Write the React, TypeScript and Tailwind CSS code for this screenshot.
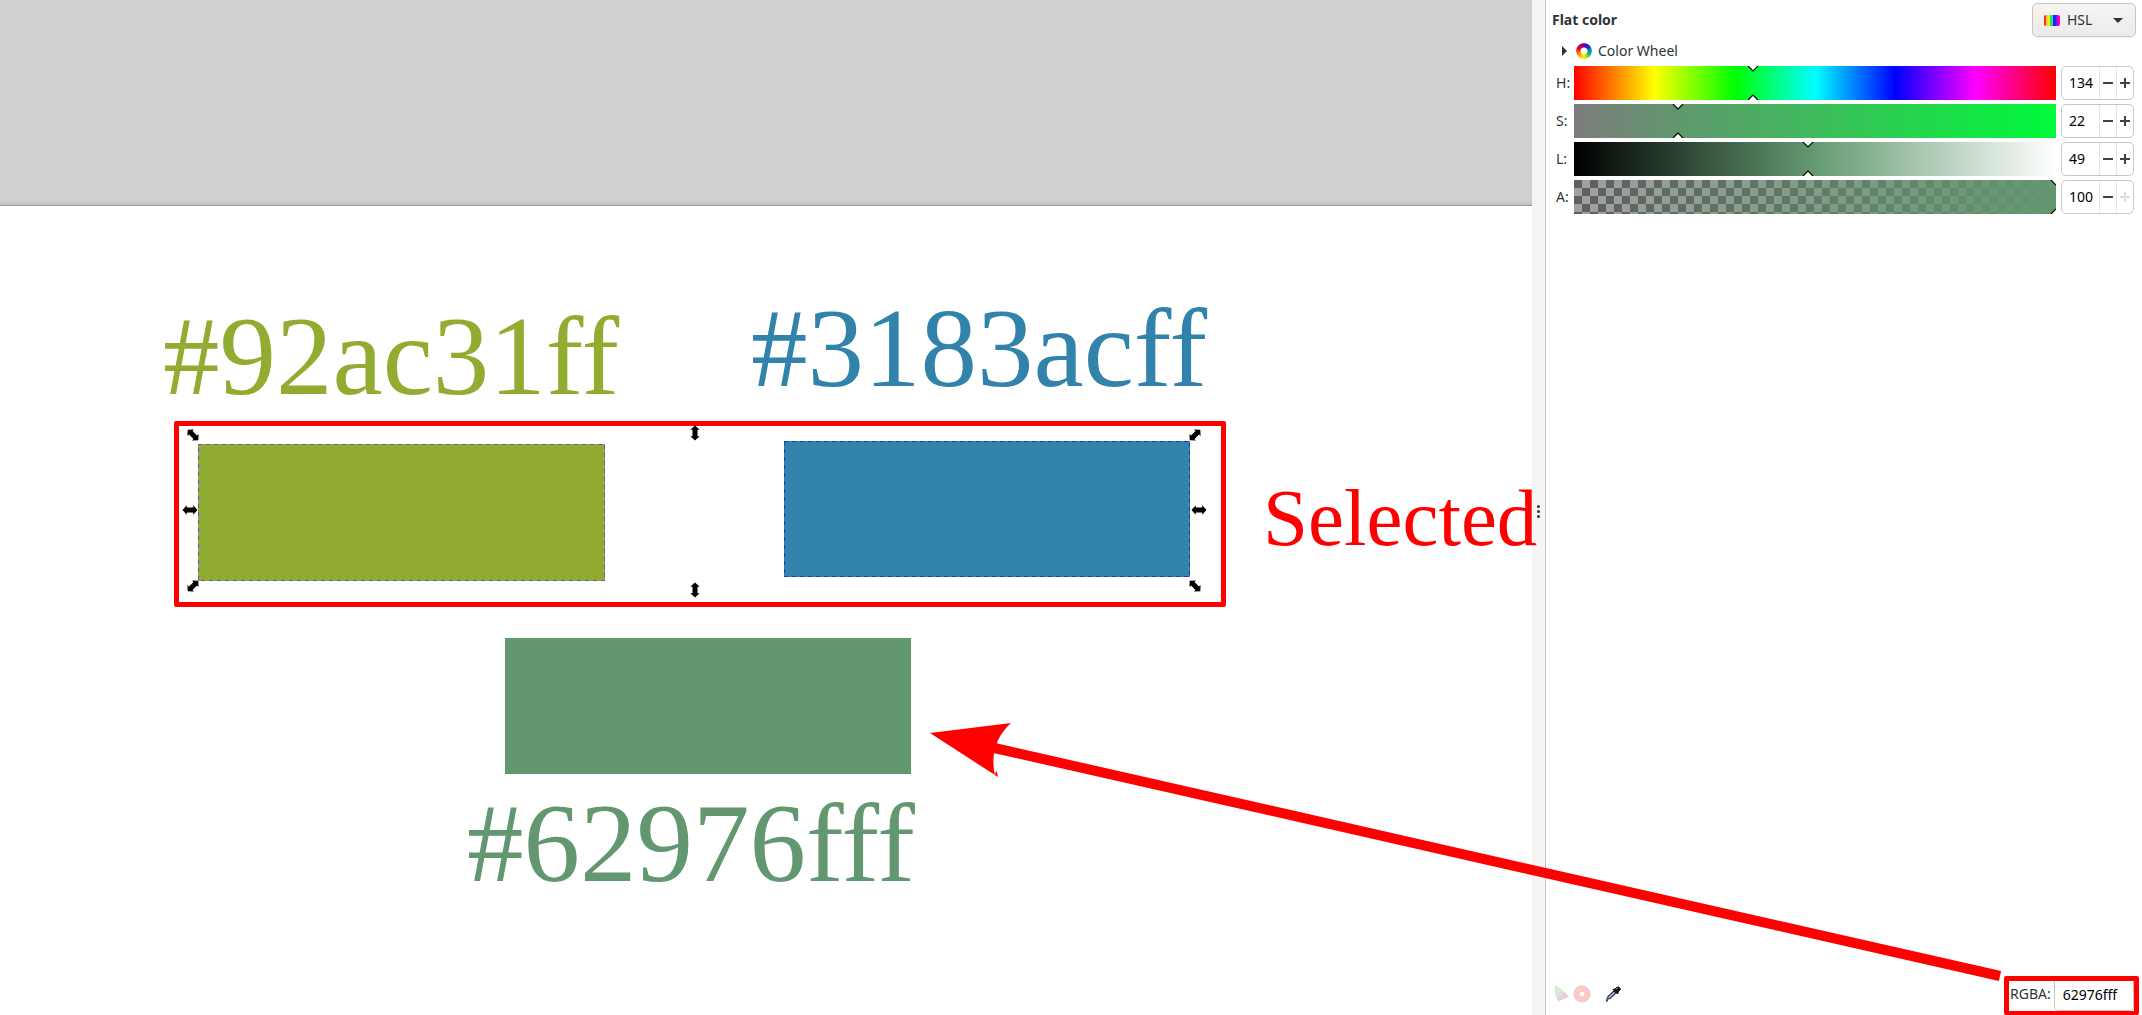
import React, { useState } from "react";

const UI = "font-['Noto_Sans',sans-serif] text-sm text-[#2e3436]";

type Direction = "ew" | "ns" | "nwse" | "nesw";

const TURN: Record<Direction, number> = { ew: 0, ns: 90, nwse: 45, nesw: -45 };

function ScaleHandle({ direction, className }: { direction: Direction; className: string }) {
  return (
    <svg viewBox="-8 -8 16 16" className={`absolute size-4 ${className}`} aria-hidden="true">
      <path
        transform={`rotate(${TURN[direction]})`}
        d="M-7.500 0L-3.200 -4.700V-2.500H3.200V-4.700L7.500 0L3.200 4.700V2.500H-3.200V4.700Z"
        fill="#000"
      />
    </svg>
  );
}

function DashedOutline({ stroke }: { stroke: string }) {
  return (
    <svg className="absolute inset-0 size-full" aria-hidden="true">
      <rect width="100%" height="100%" fill="none" stroke={stroke} strokeWidth="2" strokeDasharray="4 4" />
    </svg>
  );
}

function Canvas() {
  return (
    <main className="relative flex-1 bg-white font-['Liberation_Serif',serif]">
      <div className="h-[206px] border-b border-[#9a9a9a] bg-[#d1d1d1] shadow-[inset_0_-6px_6px_-5px_#b8b8b8]" />
      <p className="absolute left-[163px] top-[293px] text-[113px] leading-[126px] text-[#92ac31]">#92ac31ff</p>
      <p className="absolute left-[751px] top-[285px] text-[113px] leading-[126px] text-[#3183ac]">#3183acff</p>
      <div className="absolute left-[174px] top-[421px] h-[186px] w-[1052px] rounded-xs border-5 border-[#ff0000]" />
      <div className="absolute left-[198px] top-[444px] h-[137px] w-[407px] bg-[#92ac31]">
        <DashedOutline stroke="#5555cc" />
      </div>
      <div className="absolute left-[784px] top-[441px] h-[136px] w-[406px] bg-[#3183ac]">
        <DashedOutline stroke="#2233cc" />
      </div>
      <ScaleHandle direction="nwse" className="left-[185px] top-[427px]" />
      <ScaleHandle direction="ns" className="left-[687px] top-[425px]" />
      <ScaleHandle direction="nesw" className="left-[1187px] top-[427px]" />
      <ScaleHandle direction="ew" className="left-[182px] top-[502px]" />
      <ScaleHandle direction="ew" className="left-[1191px] top-[502px]" />
      <ScaleHandle direction="nesw" className="left-[185px] top-[578px]" />
      <ScaleHandle direction="ns" className="left-[687px] top-[582px]" />
      <ScaleHandle direction="nwse" className="left-[1187px] top-[578px]" />
      <p className="absolute left-[1263px] top-[473px] z-10 text-[81px] leading-[90px] text-[#ff0000]">Selected</p>
      <div className="absolute left-[505px] top-[638px] h-[136px] w-[406px] bg-[#629770]" />
      <p className="absolute left-[467px] top-[780px] text-[113px] leading-[126px] text-[#629770]">#62976fff</p>
    </main>
  );
}

type Channel = { id: string; name: string; max: number; start: number; position: number; track: string };

const CHANNELS: Channel[] = [
  {
    id: "H",
    name: "Hue",
    max: 360,
    start: 134,
    position: 37.2,
    track: "bg-[linear-gradient(to_right,#f00,#ff0_16.67%,#0f0_33.33%,#0ff_50%,#00f_66.67%,#f0f_83.33%,#f00)]",
  },
  { id: "S", name: "Saturation", max: 100, start: 22, position: 21.5, track: "bg-[linear-gradient(to_right,#7c7c7c,#00fa3a)]" },
  { id: "L", name: "Lightness", max: 100, start: 49, position: 48.6, track: "bg-[linear-gradient(to_right,#000,#649b72_50%,#fff)]" },
  {
    id: "A",
    name: "Alpha",
    max: 100,
    start: 100,
    position: 100,
    track:
      "bg-[linear-gradient(to_right,#62977000,#629770),repeating-conic-gradient(#a0a0a0_0_25%,#5f5f5f_0_50%)] bg-[size:100%_100%,16px_16px]",
  },
];

function ChannelRow({ channel }: { channel: Channel }) {
  const [value, setValue] = useState(channel.start);
  const left = value === channel.start ? channel.position : (value / channel.max) * 100;
  const step = (by: number) => setValue(Math.min(channel.max, Math.max(0, value + by)));
  return (
    <div className="flex h-[34px] items-center">
      <label htmlFor={channel.id} className="w-[18px] shrink-0">
        {channel.id}:
      </label>
      <div className={`relative h-full flex-1 overflow-hidden ${channel.track}`}>
        <input
          id={channel.id}
          type="range"
          min={0}
          max={channel.max}
          value={value}
          onChange={(e) => setValue(Number(e.target.value))}
          className="absolute inset-0 size-full opacity-0"
        />
        <svg
          viewBox="0 0 12 34"
          className="pointer-events-none absolute top-0 h-full w-3 -translate-x-1/2"
          style={{ left: `${left}%` }}
          aria-hidden="true"
        >
          <path d="M1 0L6 5L11 0M1 34L6 29L11 34" fill="#fff" stroke="#000" strokeWidth="1.200" />
        </svg>
      </div>
      <div className="ml-[5px] flex h-full w-[73px] overflow-hidden rounded-[5px] border border-[#cdc7c2] bg-white">
        <input
          aria-label={channel.name}
          value={value}
          onChange={(e) => setValue(Number(e.target.value) || 0)}
          className="w-[37px] min-w-0 pl-[7px] text-black outline-none"
        />
        <button
          aria-label={`Decrease ${channel.name}`}
          onClick={() => step(-1)}
          className="flex w-[17px] items-center justify-center border-l border-[#e8e5e3]"
        >
          <svg viewBox="0 0 10 10" className="size-2.5">
            <path d="M0 5H10" stroke="#3d4244" strokeWidth="2" />
          </svg>
        </button>
        <button
          aria-label={`Increase ${channel.name}`}
          onClick={() => step(1)}
          disabled={value >= channel.max}
          className="flex w-[17px] items-center justify-center border-l border-[#e8e5e3] text-[#3d4244] disabled:text-[#dcdcdc]"
        >
          <svg viewBox="0 0 10 10" className="size-2.5">
            <path d="M0 5H10M5 0V10" stroke="currentColor" strokeWidth="2" />
          </svg>
        </button>
      </div>
    </div>
  );
}

function ModeSelect() {
  return (
    <div className="relative h-[34px] w-[104px]">
      <select
        aria-label="Color mode"
        className="size-full appearance-none rounded-[5px] border border-[#cdc7c2] bg-linear-to-b from-[#f6f5f4] to-[#edebe9] pl-[34px] shadow-xs"
      >
        <option>HSL</option>
        <option>HSV</option>
        <option>RGB</option>
        <option>CMYK</option>
      </select>
      <span className="pointer-events-none absolute left-3 top-3 h-[11px] w-4 rounded-xs bg-[linear-gradient(to_right,#f03020_0_12%,#fc3_12%_25%,#cf3_25%_35%,#3d3_35%_48%,#2dc_48%_58%,#22e_58%_75%,#a0f_75%_85%,#f0a_85%)]" />
      <svg viewBox="0 0 10 6" className="pointer-events-none absolute right-[13px] top-[15px] h-1.5 w-2.5" aria-hidden="true">
        <path d="M0 0H10L5 5Z" fill="#2e3436" />
      </svg>
    </div>
  );
}

function GamutIcon() {
  const shape = "M1.500 1.500C4 1.500 9 6 14.500 11.500L4.500 16C1.500 12 .5 5 1.500 1.500Z";
  return (
    <svg viewBox="0 0 16 18" className="h-[18px] w-4" aria-hidden="true">
      <defs>
        <linearGradient id="gamut-base" x1="0" y1="0" x2="0" y2="1">
          <stop offset="0.250" stopColor="#c4fbc4" />
          <stop offset="0.600" stopColor="#c6f2f6" />
          <stop offset="1" stopColor="#c4c4ff" />
        </linearGradient>
        <linearGradient id="gamut-red" x1="0.300" y1="0" x2="1" y2="0.200">
          <stop offset="0" stopColor="#ffc4d0" stopOpacity="0" />
          <stop offset="0.800" stopColor="#ffc0c8" />
        </linearGradient>
      </defs>
      <path d={shape} fill="url(#gamut-base)" />
      <path d={shape} fill="url(#gamut-red)" stroke="#dcdcdc" />
    </svg>
  );
}

function GamutWarningIcon() {
  return (
    <svg viewBox="0 0 18 18" className="size-[18px]" aria-hidden="true">
      <circle cx="9" cy="9" r="5.500" fill="none" stroke="#dcc8c8" strokeWidth="6" />
      <circle cx="9" cy="9" r="5.500" fill="none" stroke="#ffc9c9" strokeWidth="4.800" />
    </svg>
  );
}

function DropperIcon() {
  return (
    <svg viewBox="0 0 16 16" className="size-4" aria-hidden="true">
      <path d="M9 5L3 10.500L2.500 13L5 12.500L11 7Z" fill="#b8cbe6" stroke="#27303c" strokeWidth="1.200" />
      <path d="M2.500 12.500L1.800 15" stroke="#3d5a86" strokeWidth="2" strokeLinecap="round" />
      <path d="M8 3.500L12.500 8L13.500 5.500L15 4C16 2.500 14 .3 12 1.200L10 3Z" fill="#111" stroke="#111" />
      <path d="M11 3L12.500 1.800" stroke="#999" />
    </svg>
  );
}

function ColorPanel() {
  return (
    <aside className={`flex w-[596px] shrink-0 flex-col bg-white pr-1.5 ${UI}`}>
      <header className="flex items-start justify-between pl-1.5 pt-[3px]">
        <h2 className="text-sm font-bold leading-[34px]">Flat color</h2>
        <ModeSelect />
      </header>
      <button className="mt-[3px] flex h-[22px] items-center pl-4 leading-[22px]">
        <svg viewBox="0 0 5 10" className="h-2.5 w-[5px]" aria-hidden="true">
          <path d="M0 0L5 5L0 10Z" fill="#2e3436" />
        </svg>
        <span className="ml-[9px] mr-1.5 size-4 rounded-full bg-[conic-gradient(#60a,#22b_45deg,#08c_80deg,#1b6_120deg,#9d0_150deg,#fe0_180deg,#fa0_225deg,#f50_265deg,#e02_290deg,#c05_320deg,#60a)] [mask:radial-gradient(circle,transparent_3px,#000_4px)]" />
        Color Wheel
      </button>
      <div className="mt-1 flex flex-col gap-1 pl-2.5 pr-0.5">
        {CHANNELS.map((channel) => (
          <ChannelRow key={channel.id} channel={channel} />
        ))}
      </div>
      <footer className="mt-auto flex h-[39px] items-start">
        <div className="flex items-center pl-2 pt-[9px]">
          <GamutIcon />
          <span className="ml-[3px]">
            <GamutWarningIcon />
          </span>
          <button aria-label="Pick color" className="ml-3.5">
            <DropperIcon />
          </button>
        </div>
        <div className="-mr-[3px] ml-auto flex h-full w-[135px] items-center rounded-xs border-5 border-b-4 border-[#ff0000]">
          <label htmlFor="rgba" className="pb-1 pl-px">
            RGBA:
          </label>
          <input
            id="rgba"
            defaultValue="62976fff"
            className="ml-[3px] h-full min-w-0 flex-1 rounded-b-[5px] border border-t-0 border-[#cdc7c2] pb-[3px] pl-2 text-black outline-none"
          />
        </div>
      </footer>
    </aside>
  );
}

function PointerArrow() {
  return (
    <svg viewBox="0 0 1080 270" className="pointer-events-none absolute bottom-[25px] right-[132px] z-20 h-[270px] w-[1080px]" aria-hidden="true">
      <path d="M60 27L1070 256" stroke="#ff0000" strokeWidth="10" />
      <path d="M0 13L81 3Q58 24 65 56Q66 46 68 57Z" fill="#ff0000" />
    </svg>
  );
}

export default function App() {
  return (
    <div className="relative flex min-h-screen overflow-hidden bg-white">
      <Canvas />
      <div className="flex w-3.5 shrink-0 flex-col items-center justify-center gap-0.5 border-r border-[#c4c0bc] bg-[#f6f5f4] pt-2">
        <span className="size-[3px] rounded-full bg-[#2e3436]" />
        <span className="size-[3px] rounded-full bg-[#2e3436]" />
        <span className="size-[3px] rounded-full bg-[#2e3436]" />
      </div>
      <ColorPanel />
      <PointerArrow />
    </div>
  );
}
